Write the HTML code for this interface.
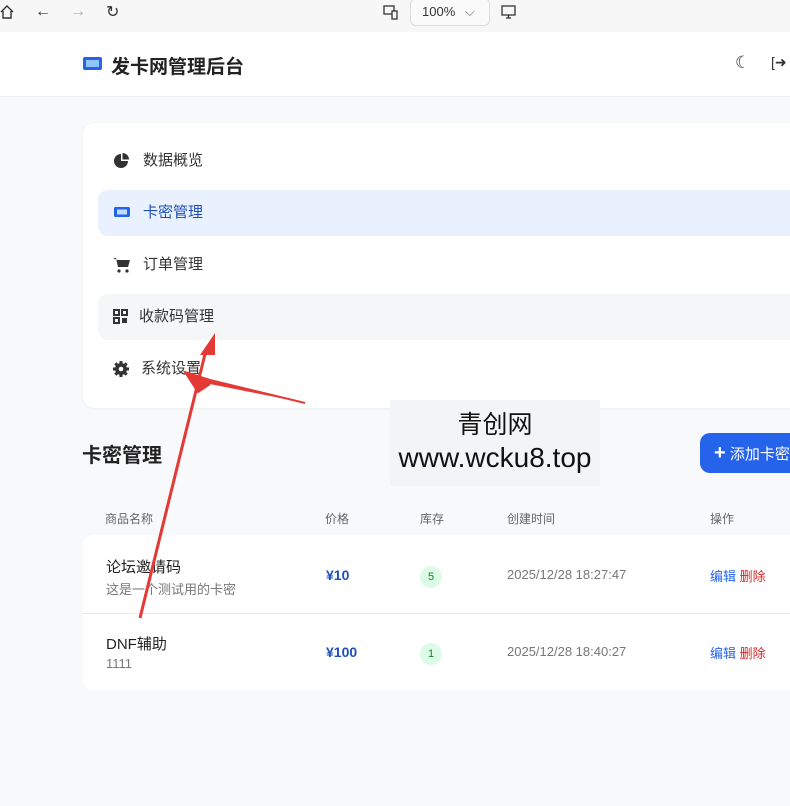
<!DOCTYPE html>
<html><head><meta charset="utf-8"><style>
*{margin:0;padding:0;box-sizing:border-box}
body{width:790px;height:806px;overflow:hidden;background:#f8f9fb;font-family:"Liberation Sans","Noto Sans CJK SC",sans-serif;position:relative;color:#333}
.tb{position:absolute;left:0;top:0;width:790px;height:32px;background:#f7f7f7}
.hd{position:absolute;left:0;top:32px;width:790px;height:65px;background:#fff;border-bottom:1px solid #eceef1}
.side{position:absolute;left:83px;top:123px;width:720px;height:285px;background:#fff;border-radius:12px;box-shadow:0 1px 3px rgba(0,0,0,.05)}
.it{position:absolute;left:15px;width:720px;height:46px;border-radius:10px;font-size:15px;color:#333;line-height:46px}
.it .t{position:absolute;left:45px}
.it svg{position:absolute;left:15px;top:15px}
.wm{position:absolute;left:390px;top:400px;width:210px;height:86px;background:#f3f4f5;text-align:center}
.card{position:absolute;left:83px;top:535px;width:720px;height:155px;background:#fff;border-radius:10px}
.th{position:absolute;top:510px;font-size:12px;color:#666}
.r{position:absolute;font-size:14px}
.badge{position:absolute;width:22px;height:22px;border-radius:11px;background:#dcfce7;color:#15803d;font-size:11px;text-align:center;line-height:22px}
</style></head><body>
<div class="tb">
<svg style="position:absolute;left:0;top:4px" width="14" height="16"><path d="M1 8 L7 2 L13 8 M3 7 V14 H11 V7" stroke="#333" fill="none" stroke-width="1.4"/></svg>
<span style="position:absolute;left:35px;top:3px;font-size:16px;color:#333">←</span>
<span style="position:absolute;left:70px;top:3px;font-size:16px;color:#aaa">→</span>
<span style="position:absolute;left:106px;top:2px;font-size:16px;color:#333">↻</span>
<svg style="position:absolute;left:383px;top:4px" width="16" height="16"><rect x="1" y="2" width="10" height="8" fill="none" stroke="#333" stroke-width="1.3"/><rect x="9" y="7" width="5" height="8" fill="#f7f7f7" stroke="#333" stroke-width="1.3"/></svg>
<div style="position:absolute;left:410px;top:-2px;width:80px;height:28px;border:1px solid #ddd;border-radius:6px;background:#fafafa;font-size:13px;line-height:26px;padding-left:11px;color:#333">100% <span style="color:#666;margin-left:6px">⌵</span></div>
<svg style="position:absolute;left:500px;top:3px" width="18" height="18"><rect x="2" y="3" width="13" height="9" fill="none" stroke="#333" stroke-width="1.3"/><path d="M6 15 H11 M8.5 12 V15" stroke="#333" stroke-width="1.3"/></svg>
</div>
<div class="hd">
<svg style="position:absolute;left:82px;top:24px" width="21" height="15"><rect x="1" y="1" width="19" height="13" rx="2" fill="#2563eb"/><rect x="4" y="4" width="13" height="7" fill="#93c5fd"/></svg>
<span style="position:absolute;left:111px;top:20px;font-size:19px;font-weight:bold;color:#222">发卡网管理后台</span>
<span style="position:absolute;left:735px;top:21px;font-size:17px;color:#333">☾</span>
<span style="position:absolute;left:771px;top:22px;font-size:14px;color:#333">[➜</span>
</div>
<div class="side">
<div class="it" style="top:15px"><svg width="16" height="16"><path d="M8 1 A7 7 0 1 0 15 8 H8Z" fill="#333"/><path d="M9.5 0 A6.5 6.5 0 0 1 16 6.5 H9.5Z" fill="#333"/></svg><span class="t">数据概览</span></div>
<div class="it" style="top:67px;background:#e8f1fd;color:#1e4fb8"><svg width="18" height="14"><rect x="1" y="2" width="16" height="10" rx="1.5" fill="#2563eb"/><rect x="4" y="4.5" width="10" height="5" fill="#bfdbfe"/></svg><span class="t">卡密管理</span></div>
<div class="it" style="top:119px"><svg width="18" height="16"><path d="M0 1 H3 L5 10 H15 L17 3 H4" fill="#333"/><circle cx="6" cy="14" r="1.6" fill="#333"/><circle cx="14" cy="14" r="1.6" fill="#333"/></svg><span class="t">订单管理</span></div>
<div class="it" style="top:171px;background:#f5f6f8"><svg width="15" height="15"><rect x="1" y="1" width="5" height="5" fill="none" stroke="#333" stroke-width="2"/><rect x="9" y="1" width="5" height="5" fill="none" stroke="#333" stroke-width="2"/><rect x="1" y="9" width="5" height="5" fill="none" stroke="#333" stroke-width="2"/><rect x="9" y="9" width="5" height="5" fill="#333"/></svg><span class="t" style="left:41px">收款码管理</span></div>
<div class="it" style="top:223px"><svg width="16" height="16"><circle cx="8" cy="8" r="6" fill="#333"/><path d="M8 0 V16 M0 8 H16 M2.3 2.3 L13.7 13.7 M13.7 2.3 L2.3 13.7" stroke="#333" stroke-width="3"/><circle cx="8" cy="8" r="2.3" fill="#fff"/></svg><span class="t" style="left:43px">系统设置</span></div>
</div>
<div class="wm"><div style="font-size:25px;color:#111;margin-top:10px;line-height:30px">青创网</div><div style="font-size:28px;color:#111;line-height:36px;white-space:nowrap;margin-left:-10px;margin-right:-10px">www.wcku8.top</div></div>
<div style="position:absolute;left:82px;top:439px;font-size:20px;font-weight:bold;color:#222">卡密管理</div>
<div style="position:absolute;left:700px;top:433px;width:110px;height:40px;background:#2563eb;border-radius:10px;color:#fff;font-size:15px;line-height:40px;padding-left:14px"><b style="font-size:20px">+</b> 添加卡密</div>
<span class="th" style="left:105px">商品名称</span><span class="th" style="left:325px">价格</span><span class="th" style="left:420px">库存</span><span class="th" style="left:507px">创建时间</span><span class="th" style="left:710px">操作</span>
<div class="card"></div>
<div style="position:absolute;left:83px;top:613px;width:720px;height:1px;background:#e8eaed"></div>
<div class="r" style="left:106px;top:556px;font-size:15px;color:#222">论坛邀请码</div>
<div class="r" style="left:106px;top:579px;font-size:13px;color:#777">这是一个测试用的卡密</div>
<div class="r" style="left:326px;top:567px;color:#1e4fb8;font-weight:bold">¥10</div>
<div class="badge" style="left:420px;top:566px">5</div>
<div class="r" style="left:507px;top:567px;color:#777;font-size:13px">2025/12/28 18:27:47</div>
<div class="r" style="left:710px;top:566px;font-size:13px"><span style="color:#2563eb">编辑</span> <span style="color:#dc2626">删除</span></div>
<div class="r" style="left:106px;top:633px;font-size:15px;color:#222">DNF辅助</div>
<div class="r" style="left:106px;top:656px;font-size:13px;color:#777">1111</div>
<div class="r" style="left:326px;top:644px;color:#1e4fb8;font-weight:bold">¥100</div>
<div class="badge" style="left:420px;top:643px">1</div>
<div class="r" style="left:507px;top:644px;color:#777;font-size:13px">2025/12/28 18:40:27</div>
<div class="r" style="left:710px;top:643px;font-size:13px"><span style="color:#2563eb">编辑</span> <span style="color:#dc2626">删除</span></div>
<svg style="position:absolute;left:0;top:0" width="790" height="806">
<path d="M140 618 L206 350" stroke="#e53935" stroke-width="3"/>
<path d="M215 333 L200 355 L215 355Z" fill="#e53935"/>
<path d="M305 403 L210 380 L185 372 L198 392 L210 384" fill="#e53935" stroke="#e53935" stroke-width="2"/>
</svg>
</body></html>
